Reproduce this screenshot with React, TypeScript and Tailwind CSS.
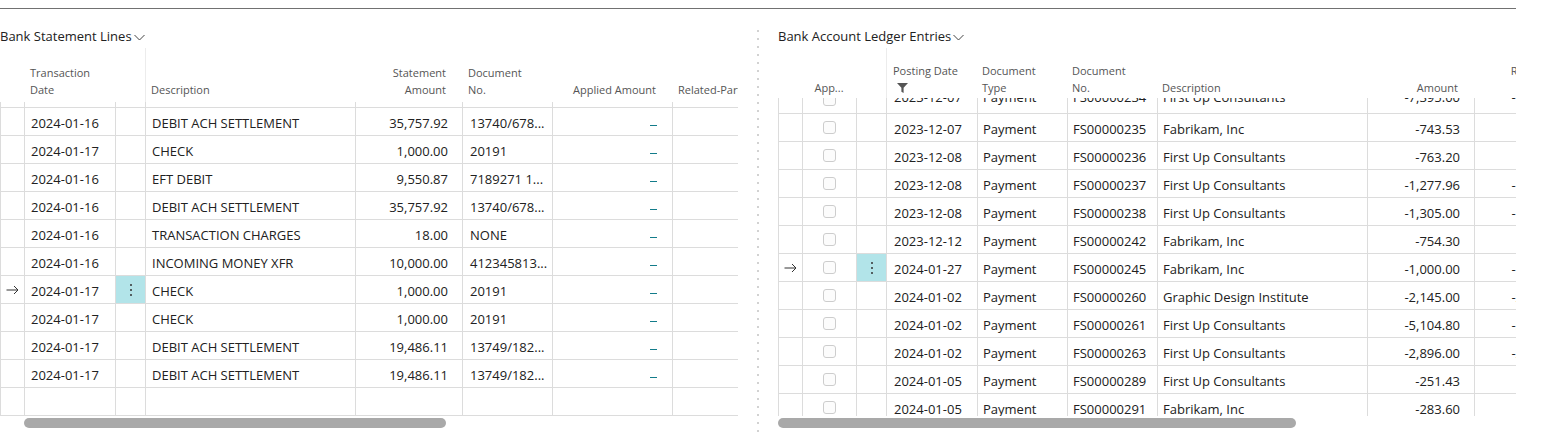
import React from "react";

const leftRows: string[][] = [
  ["2024-01-16", "DEBIT ACH SETTLEMENT", "35,757.92", "13740/678..."],
  ["2024-01-17", "CHECK", "1,000.00", "20191"],
  ["2024-01-16", "EFT DEBIT", "9,550.87", "7189271 1..."],
  ["2024-01-16", "DEBIT ACH SETTLEMENT", "35,757.92", "13740/678..."],
  ["2024-01-16", "TRANSACTION CHARGES", "18.00", "NONE"],
  ["2024-01-16", "INCOMING MONEY XFR", "10,000.00", "412345813..."],
  ["2024-01-17", "CHECK", "1,000.00", "20191"],
  ["2024-01-17", "CHECK", "1,000.00", "20191"],
  ["2024-01-17", "DEBIT ACH SETTLEMENT", "19,486.11", "13749/182..."],
  ["2024-01-17", "DEBIT ACH SETTLEMENT", "19,486.11", "13749/182..."],
];

const rightRows: string[][] = [
  ["2023-12-07", "Payment", "FS00000234", "First Up Consultants", "-7,395.00"],
  ["2023-12-07", "Payment", "FS00000235", "Fabrikam, Inc", "-743.53"],
  ["2023-12-08", "Payment", "FS00000236", "First Up Consultants", "-763.20"],
  ["2023-12-08", "Payment", "FS00000237", "First Up Consultants", "-1,277.96"],
  ["2023-12-08", "Payment", "FS00000238", "First Up Consultants", "-1,305.00"],
  ["2023-12-12", "Payment", "FS00000242", "Fabrikam, Inc", "-754.30"],
  ["2024-01-27", "Payment", "FS00000245", "Fabrikam, Inc", "-1,000.00"],
  ["2024-01-02", "Payment", "FS00000260", "Graphic Design Institute", "-2,145.00"],
  ["2024-01-02", "Payment", "FS00000261", "First Up Consultants", "-5,104.80"],
  ["2024-01-02", "Payment", "FS00000263", "First Up Consultants", "-2,896.00"],
  ["2024-01-05", "Payment", "FS00000289", "First Up Consultants", "-251.43"],
  ["2024-01-05", "Payment", "FS00000291", "Fabrikam, Inc", "-283.60"],
];

const cell = "h-[28px] border-l border-b border-[#dcdcdc] flex items-center overflow-hidden whitespace-nowrap";
const cellPad = " pt-[4px]";
const cellPadTop = " pb-[4px]";

function Arrow() {
  return (
    <svg width="13" height="10" viewBox="0 0 13 10" fill="none" stroke="#333" strokeWidth="1">
      <path d="M0.5 5H12M8 1l4 4-4 4" />
    </svg>
  );
}

function Dots() {
  return (
    <svg width="4" height="14" viewBox="0 0 4 14" fill="#333">
      <circle cx="2" cy="2" r="1" />
      <circle cx="2" cy="7" r="1" />
      <circle cx="2" cy="12" r="1" />
    </svg>
  );
}

function Chevron() {
  return (
    <svg width="11" height="7" viewBox="0 0 11 7" fill="none" stroke="#444" strokeWidth="1">
      <path d="M0.5 1l5 5 5-5" />
    </svg>
  );
}

function Funnel() {
  return (
    <svg width="11" height="10" viewBox="0 0 11 10" fill="#555">
      <path d="M0 0H11L6.6 4.8V10L4.4 8.8V4.8Z" />
    </svg>
  );
}

function Checkbox() {
  return <div className="w-[13px] h-[13px] rounded-[3px] border border-[#cdcdcd] bg-[#fcfcfc]" />;
}

function Underscore() {
  return <div className="mt-[7px] w-[7px] h-px bg-[#127c8a]" />;
}

function LeftPanel() {
  return (
    <div className="w-[738px] flex flex-col">
      <div className="h-[39px] pt-[17px] flex items-start">
        <div className="flex items-center gap-[2px] leading-[20px] text-[13px] text-[#212121]">
          <span>Bank Statement Lines</span>
          <span className="mt-[2px]"><Chevron /></span>
        </div>
      </div>
      <div className="h-[54px] w-[738px] overflow-hidden">
        <div className="grid grid-cols-[24px_91px_30px_210px_107px_90px_120px_150px] w-max h-[54px] text-[11px] leading-[17px] text-[#555]">
          <div />
          <div className="flex flex-col justify-end pl-[6px] pb-[4px]"><span>Transaction</span><span>Date</span></div>
          <div />
          <div className="flex flex-col justify-end pl-[5px] pb-[4px] border-l border-[#ececec]"><span>Description</span></div>
          <div className="flex flex-col justify-end items-end pr-[16px] pb-[4px]"><span>Statement</span><span>Amount</span></div>
          <div className="flex flex-col justify-end pl-[6px] pb-[4px]"><span>Document</span><span>No.</span></div>
          <div className="flex flex-col justify-end items-end pr-[16px] pb-[4px]"><span>Applied Amount</span></div>
          <div className="flex flex-col justify-end pl-[6px] pb-[4px] whitespace-nowrap"><span>Related-Party Name</span></div>
        </div>
      </div>
      <div className="h-[314px] w-[738px] overflow-hidden">
        <div className="-mt-[22px] text-[13px] text-[#212121]">
          {[null, ...leftRows, []].map((r, i) => {
            const sel = i === 7;
            const row = r ?? [];
            const has = row.length > 0;
            const p = cellPad;
            return (
              <div key={i} className="grid grid-cols-[24px_91px_30px_210px_107px_90px_120px_150px] w-max">
                <div className={cell + " justify-center"}>{sel ? <Arrow /> : null}</div>
                <div className={cell + p + " pl-[6px]"}>{row[0]}</div>
                <div className={cell + " justify-center " + (sel ? "bg-[#b2e4e9]" : "")}>{sel ? <Dots /> : null}</div>
                <div className={cell + p + " pl-[6px]"}>{row[1]}</div>
                <div className={cell + p + " justify-end pr-[14px]"}>{row[2]}</div>
                <div className={cell + p + " pl-[7px]"}>{row[3]}</div>
                <div className={cell + " justify-end pr-[15px]"}>{has ? <Underscore /> : null}</div>
                <div className={cell + " pl-[6px]"}></div>
              </div>
            );
          })}
        </div>
      </div>
      <div className="h-[10px] mt-[2px]">
        <div className="ml-[24px] w-[422px] h-[10px] rounded-full bg-[#a9a9a9]" />
      </div>
    </div>
  );
}

function RightPanel() {
  return (
    <div className="w-[738px] flex flex-col">
      <div className="h-[39px] pt-[17px] flex items-start">
        <div className="flex items-center gap-[2px] leading-[20px] text-[13px] text-[#212121]">
          <span>Bank Account Ledger Entries</span>
          <span className="mt-[2px]"><Chevron /></span>
        </div>
      </div>
      <div className="h-[50px] w-[738px] overflow-hidden">
        <div className="grid grid-cols-[24px_54px_30px_91px_90px_90px_210px_107px_107px] w-max h-[50px] text-[11px] leading-[17px] text-[#555]">
          <div />
          <div className="flex flex-col justify-end items-center pb-[2px]"><span>App...</span></div>
          <div />
          <div className="flex flex-col justify-end pl-[6px] pb-[2px] border-l border-[#ececec]">
            <span>Posting Date</span>
            <span className="h-[17px] flex items-center pl-[4px]"><Funnel /></span>
          </div>
          <div className="flex flex-col justify-end pl-[5px] pb-[2px]"><span>Document</span><span>Type</span></div>
          <div className="flex flex-col justify-end pl-[5px] pb-[2px]"><span>Document</span><span>No.</span></div>
          <div className="flex flex-col justify-end pl-[5px] pb-[2px]"><span>Description</span></div>
          <div className="flex flex-col justify-end items-end pr-[16px] pb-[2px]"><span>Amount</span></div>
          <div className="flex flex-col justify-end items-end pr-[16px] pb-[2px]"><span>Remaining</span><span>Amount</span></div>
        </div>
      </div>
      <div className="h-[318px] w-[738px] overflow-hidden">
        <div className="-mt-[12px] text-[13px] text-[#212121]">
          {rightRows.map((r, i) => {
            const sel = i === 6;
            const p = i === 0 ? cellPadTop : cellPad;
            return (
              <div key={i} className="grid grid-cols-[24px_54px_30px_91px_90px_90px_210px_107px_107px] w-max">
                <div className={cell + " justify-center"}>{sel ? <Arrow /> : null}</div>
                <div className={cell + " justify-center"}><Checkbox /></div>
                <div className={cell + " justify-center " + (sel ? "bg-[#b2e4e9]" : "")}>{sel ? <Dots /> : null}</div>
                <div className={cell + p + " pl-[7px]"}>{r[0]}</div>
                <div className={cell + p + " pl-[5px]"}>{r[1]}</div>
                <div className={cell + p + " pl-[5px]"}>{r[2]}</div>
                <div className={cell + p + " pl-[5px]"}>{r[3]}</div>
                <div className={cell + p + " justify-end pr-[14px]"}>{r[4]}</div>
                <div className={cell + p + " justify-end pr-[14px]"}>{r[4]}</div>
              </div>
            );
          })}
        </div>
      </div>
      <div className="h-[10px] mt-[2px]">
        <div className="w-[518px] h-[10px] rounded-full bg-[#a9a9a9]" />
      </div>
    </div>
  );
}

export default function App() {
  return (
    <div className="w-[1542px] h-[436px] bg-white overflow-hidden font-['Open_Sans',sans-serif]">
      <div className="h-[8px]" />
      <div className="w-[1516px] h-px bg-[#717171]" />
      <div className="flex">
        <LeftPanel />
        <div className="w-[40px] flex justify-center">
          <div className="mt-[21px] w-[2px] h-[410px] bg-[image:repeating-linear-gradient(to_bottom,#d2d2d2_0px,#d2d2d2_2px,transparent_2px,transparent_8px)]" />
        </div>
        <RightPanel />
      </div>
    </div>
  );
}
